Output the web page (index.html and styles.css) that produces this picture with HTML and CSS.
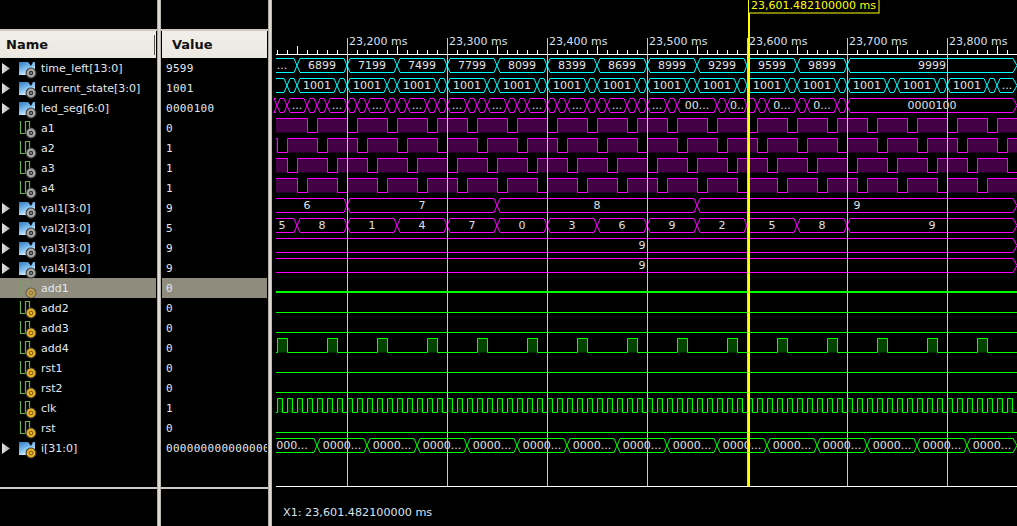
FILE: index.html
```html
<!DOCTYPE html>
<html lang="en">
<head>
  <meta charset="UTF-8" />
  <title>Wave viewer</title>
  <link rel="stylesheet" href="styles.css">
</head>
<body>
  <svg class="defs">
    <defs>
      <linearGradient id="busFill" x1="0" y1="0" x2="0.6" y2="1">
        <stop offset="0" stop-color="#2f78c4"/>
        <stop offset="0.55" stop-color="#7fc0ee"/>
        <stop offset="1" stop-color="#f4f8fb"/>
      </linearGradient>
      <linearGradient id="arrowFill" x1="0" y1="0" x2="1" y2="0">
        <stop offset="0" stop-color="#e4e4e4"/>
        <stop offset="1" stop-color="#a8a8a8"/>
      </linearGradient>
      <symbol id="arrow" viewBox="0 0 8 11"><path d="M0 0 L8 5.5 L0 11 Z" fill="url(#arrowFill)"/></symbol>
      <symbol id="bus" viewBox="0 0 18 18"><path d="M0 1 H9 L12 5 L14 1 H16 V14 H0 Z" fill="url(#busFill)"/></symbol>
      <symbol id="wire" viewBox="0 0 18 18"><path d="M1.5 0 V12.5 H6.5 V0.5 H10.5 V10" fill="none" stroke="#6fae55" stroke-width="1.2"/></symbol>
      <symbol id="gear" viewBox="0 0 18 18">
        <circle cx="12" cy="12" r="5.5" fill="#3a3a3a"/>
        <circle cx="12" cy="12" r="4.4" fill="#a8a8a8"/>
        <circle cx="12" cy="12" r="2.2" fill="#333"/>
        <circle cx="12" cy="12" r="0.8" fill="#ddd"/>
      </symbol>
      <symbol id="coin" viewBox="0 0 18 18">
        <circle cx="12" cy="12" r="5.5" fill="#3a3a3a"/>
        <circle cx="12" cy="12" r="4.4" fill="#f2b41e"/>
        <circle cx="12" cy="12" r="1.9" fill="none" stroke="#6b5a2a" stroke-width="1"/>
      </symbol>
    </defs>
  </svg>

  <div class="app">
    <section class="pane names">
      <div class="head head-name">Name</div>
      <div class="rows">
        <div class="row"><svg class="arrow"><use href="#arrow"/></svg><svg class="icon"><use href="#bus"/><use href="#gear"/></svg>time_left[13:0]</div>
        <div class="row"><svg class="arrow"><use href="#arrow"/></svg><svg class="icon"><use href="#bus"/><use href="#gear"/></svg>current_state[3:0]</div>
        <div class="row"><svg class="arrow"><use href="#arrow"/></svg><svg class="icon"><use href="#bus"/><use href="#gear"/></svg>led_seg[6:0]</div>
        <div class="row"><span class="arrow"></span><svg class="icon"><use href="#wire"/><use href="#gear"/></svg>a1</div>
        <div class="row"><span class="arrow"></span><svg class="icon"><use href="#wire"/><use href="#gear"/></svg>a2</div>
        <div class="row"><span class="arrow"></span><svg class="icon"><use href="#wire"/><use href="#gear"/></svg>a3</div>
        <div class="row"><span class="arrow"></span><svg class="icon"><use href="#wire"/><use href="#gear"/></svg>a4</div>
        <div class="row"><svg class="arrow"><use href="#arrow"/></svg><svg class="icon"><use href="#bus"/><use href="#gear"/></svg>val1[3:0]</div>
        <div class="row"><svg class="arrow"><use href="#arrow"/></svg><svg class="icon"><use href="#bus"/><use href="#gear"/></svg>val2[3:0]</div>
        <div class="row"><svg class="arrow"><use href="#arrow"/></svg><svg class="icon"><use href="#bus"/><use href="#gear"/></svg>val3[3:0]</div>
        <div class="row"><svg class="arrow"><use href="#arrow"/></svg><svg class="icon"><use href="#bus"/><use href="#gear"/></svg>val4[3:0]</div>
        <div class="row selected"><span class="arrow"></span><svg class="icon"><use href="#wire"/><use href="#coin"/></svg>add1</div>
        <div class="row"><span class="arrow"></span><svg class="icon"><use href="#wire"/><use href="#coin"/></svg>add2</div>
        <div class="row"><span class="arrow"></span><svg class="icon"><use href="#wire"/><use href="#coin"/></svg>add3</div>
        <div class="row"><span class="arrow"></span><svg class="icon"><use href="#wire"/><use href="#coin"/></svg>add4</div>
        <div class="row"><span class="arrow"></span><svg class="icon"><use href="#wire"/><use href="#coin"/></svg>rst1</div>
        <div class="row"><span class="arrow"></span><svg class="icon"><use href="#wire"/><use href="#coin"/></svg>rst2</div>
        <div class="row"><span class="arrow"></span><svg class="icon"><use href="#wire"/><use href="#coin"/></svg>clk</div>
        <div class="row"><span class="arrow"></span><svg class="icon"><use href="#wire"/><use href="#coin"/></svg>rst</div>
        <div class="row"><svg class="arrow"><use href="#arrow"/></svg><svg class="icon"><use href="#bus"/><use href="#coin"/></svg>i[31:0]</div>
      </div>
    </section>
    <div class="splitter"></div>
    <section class="pane values">
      <div class="head head-value">Value</div>
      <div class="rows">
        <div class="row">9599</div>
        <div class="row">1001</div>
        <div class="row">0000100</div>
        <div class="row">0</div>
        <div class="row">1</div>
        <div class="row">1</div>
        <div class="row">1</div>
        <div class="row">9</div>
        <div class="row">5</div>
        <div class="row">9</div>
        <div class="row">9</div>
        <div class="row selected">0</div>
        <div class="row">0</div>
        <div class="row">0</div>
        <div class="row">0</div>
        <div class="row">0</div>
        <div class="row">0</div>
        <div class="row">1</div>
        <div class="row">0</div>
        <div class="row">000000000000000</div>
      </div>
    </section>
    <div class="splitter"></div>
    <section class="waves">
      <svg id="waves" viewBox="272 0 745 526" width="745" height="526"></svg>
    </section>
  </div>

  <script src="waves.js"></script>
</body>
</html>
```

FILE: styles.css
```css
html, body {
  margin: 0;
  height: 100%;
  background: #000;
  overflow: hidden;
}

.defs {
  position: absolute;
  width: 0;
  height: 0;
}

.app {
  display: grid;
  grid-template-columns: 157px 4px 107px 4px 745px;
  height: 526px;
}

.splitter {
  background: linear-gradient(to right, #8d8a82, #dedad3 30%, #dedad3 70%, #a5a29a);
}

.pane {
  box-sizing: border-box;
  height: 526px;
  padding-top: 31px;
  overflow: hidden;
  position: relative;
  display: flex;
  flex-direction: column;
}

/* lines above the header and above the footer */
.pane::before,
.pane::after {
  content: "";
  position: absolute;
  left: 0;
  right: 0;
  height: 2px;
  background: #cfcbc4;
}
.pane::before { top: 29px; }
.pane::after { top: 487px; }

.names { padding-right: 1px; }
.values { padding: 31px 1px 0 1px; }

.head {
  height: 27px;
  flex: none;
  display: flex;
  align-items: center;
  background: linear-gradient(to bottom, #f1eee9, #ebe8e2);
  color: #111;
  font: bold 13px "DejaVu Sans", sans-serif;
}
.head-name { padding-left: 6px; }
.head-name::after {
  content: "";
  width: 1px;
  height: 20px;
  margin-left: auto;
  margin-right: 1px;
  background: #55534e;
}
.head-value { padding-left: 10px; }

.row {
  height: 20px;
  display: flex;
  align-items: center;
  white-space: nowrap;
  color: #e4e8ee;
  font: 11px "DejaVu Sans", sans-serif;
}
.names .row { padding-left: 2px; }
.values .row {
  padding-left: 4px;
  overflow: hidden;
  font: 11px "DejaVu Sans Mono", monospace;
  letter-spacing: 0.3px;
}

.selected { background: #8f8c7e; }
.selected .icon { opacity: 0.55; }

.arrow {
  flex: none;
  width: 8px;
  height: 11px;
  margin-right: 9px;
}
.icon {
  flex: none;
  width: 18px;
  height: 18px;
  margin: 4px 4px 0 0;
}

.waves svg { display: block; }

.label {
  font: 11px "DejaVu Sans", sans-serif;
  fill: #d8e2f0;
}
.status { font-size: 11.2px; }
.value-text {
  font: 11px "DejaVu Sans", sans-serif;
  fill: #e2e2e2;
  text-anchor: middle;
}
.cursor-text {
  font: 11px "DejaVu Sans", sans-serif;
  fill: #ffff00;
}
```

FILE: waves.js
```js
const svg = document.getElementById("waves");
const NS = "http://www.w3.org/2000/svg";

const CYAN = "#00ffff";
const PINK = "#ff00ff";
const GREEN = "#00ff00";
const END = 1017;

function add(tag, attrs, text) {
  const el = document.createElementNS(NS, tag);
  for (const k in attrs) el.setAttribute(k, attrs[k]);
  if (text) el.textContent = text;
  svg.appendChild(el);
}

function rowTop(row) {
  return 58.5 + 20 * row;
}

// segs: [startX, label, optional text centre]
function bus(row, color, segs) {
  const top = rowTop(row);
  const bot = top + 14;
  const mid = top + 7;
  let d = "";
  segs.forEach((s, i) => {
    const a = s[0];
    const last = i === segs.length - 1;
    const b = last ? END : segs[i + 1][0];
    const slope = last ? 4 : 3;
    const right = `H${b - slope} L${b} ${mid} L${b - slope} ${bot}`;
    if (i === 0) {
      d += `M${a} ${top} ${right} H${a} `;
    } else {
      d += `M${a} ${mid} L${a + 3} ${top} ${right} H${a + 3} L${a} ${mid} `;
    }
    if (s[1]) {
      const x = s[2] !== undefined ? s[2] : (a + b) / 2;
      add("text", { x: x, y: top + 10.5, class: "value-text" }, s[1]);
    }
  });
  add("path", { d: d, fill: "none", stroke: color });
}

// edges toggle the level, fill sits under the high parts
function digital(row, color, fill, startHigh, edges) {
  const high = rowTop(row);
  const low = high + 14;
  let level = startHigh;
  let x = 276;
  let d = `M${x} ${level ? high : low}`;
  edges.concat([END]).forEach((e, i) => {
    const inside = i < edges.length;
    const ex = inside ? e + 0.5 : e;
    if (level && fill) {
      add("rect", { x: x, y: high, width: ex - x, height: 14, fill: fill });
    }
    d += ` H${ex}`;
    if (inside) {
      level = !level;
      d += ` V${level ? high : low}`;
    }
    x = ex;
  });
  add("path", { d: d, fill: "none", stroke: color });
}

function steps(from, period, hold) {
  const out = [];
  for (let x = from; x < END; x += period) {
    out.push(x);
    if (x + hold < END) out.push(x + hold);
  }
  return out;
}

function everyFifty(from, labels) {
  return labels.map((l, i) => [from + i * 50, l]);
}

// ruler
add("path", { d: `M276 54.5 H${END}`, stroke: "#fff", fill: "none" });
let ticks = "";
for (let x = 277; x < END; x += 10) {
  const big = (x - 297) % 50 === 0;
  ticks += `M${x + 0.5} ${big ? 46 : 50} V54 `;
}
add("path", { d: ticks, stroke: "#fff", fill: "none" });
["23,200", "23,300", "23,400", "23,500", "23,600", "23,700", "23,800"].forEach((t, i) => {
  add("text", { x: 349 + i * 100, y: 45, class: "label" }, t + " ms");
});

// time_left
bus(0, CYAN, [[276, "...", 282]].concat(
  everyFifty(297, ["6899", "7199", "7499", "7799", "8099", "8399", "8699", "8999", "9299", "9599", "9899"]),
  [[847, "9999"]]
));

// current_state
const state = [[276, ""]];
for (let x = 287; x < 987; x += 50) {
  state.push([x, ""], [x + 10, "1001"]);
}
state.push([987, ""], [997, "..."]);
bus(1, CYAN, state);

// led_seg
const led = [[276, ""]];
[277, 307, 317, 347, 357, 387, 397, 427, 437, 467, 477, 507, 517, 547, 557, 587, 597, 627, 637].forEach(x => led.push([x, ""]));
[287, 327, 367, 407, 447, 487, 527, 567, 607, 647].forEach(x => led.push([x, "..."]));
led.push([667, ""], [677, "00..."], [717, ""], [727, "0.."], [747, ""], [757, ""]);
led.push([767, "0..."], [797, ""], [807, "0..."], [837, ""], [847, "0000100"]);
led.sort((p, q) => p[0] - q[0]);
bus(2, PINK, led);

// a1..a4, one digit lit at a time
[307, 277, 287, 297].forEach((from, i) => {
  digital(3 + i, PINK, "#440044", true, steps(from, 40, 10));
});

bus(7, PINK, [[276, "6", 307], [347, "7"], [497, "8"], [697, "9"]]);
bus(8, PINK, [[276, "5", 282]].concat(
  everyFifty(297, ["8", "1", "4", "7", "0", "3", "6", "9", "2", "5", "8"]),
  [[847, "9"]]
));
bus(9, PINK, [[276, "9", 642]]);
bus(10, PINK, [[276, "9", 642]]);

digital(12, GREEN, null, false, []);
digital(13, GREEN, null, false, []);
digital(14, GREEN, "#004400", false, steps(277, 50, 10));
digital(15, GREEN, null, false, []);
digital(16, GREEN, null, false, []);
digital(17, GREEN, "#003300", false, steps(277, 10, 5));
digital(18, GREEN, null, false, []);

// add1 is the selected trace, drawn thicker
add("path", { d: `M276 292 H${END}`, fill: "none", stroke: GREEN, "stroke-width": 2 });

const loop = [[276, "000...", 292]];
for (let x = 317; x < END; x += 50) loop.push([x, "0000..."]);
bus(19, GREEN, loop);

// grid on top of the traces
for (let x = 347; x < END; x += 100) {
  add("path", { d: `M${x + 0.5} 38 V486`, stroke: "#c8c8c8", fill: "none" });
}
add("path", { d: `M276 486.5 H${END}`, stroke: "#fff", fill: "none" });

// cursor
add("rect", { x: 748, y: 0, width: 2, height: 487, fill: "#ffff00" });
add("rect", { x: 748.5, y: -1, width: 130.5, height: 14, fill: "#000", stroke: "#ffff00" });
add("text", { x: 751, y: 9, class: "cursor-text" }, "23,601.482100000 ms");

add("text", { x: 283, y: 516, class: "label status" }, "X1: 23,601.482100000 ms");
```
